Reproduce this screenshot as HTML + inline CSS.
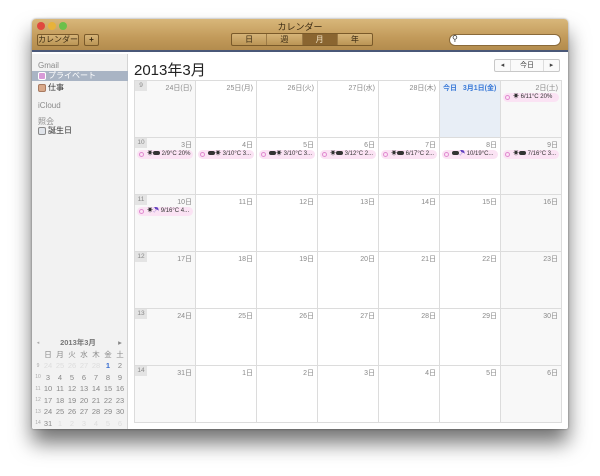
<!DOCTYPE html>
<html><head><meta charset="utf-8"><style>
*{margin:0;padding:0;box-sizing:border-box}
body{width:600px;height:476px;background:#fff;position:relative;overflow:hidden;font-family:"Liberation Sans","Noto Sans CJK JP",sans-serif}
.win{position:absolute;left:32px;top:19px;width:536px;height:410px;background:#fff;border-radius:4px 4px 2px 2px;box-shadow:0 14px 20px rgba(0,0,0,.55),0 0 2px rgba(0,0,0,.4);overflow:hidden}
.tb{position:absolute;left:0;top:0;width:536px;height:33px;background:linear-gradient(#d8b77a,#c29a5a 60%,#b38c4e);border-bottom:2px solid #4a5878}
.dot{position:absolute;top:3px;width:8px;height:8px;border-radius:50%}
.title{position:absolute;top:1px;left:0;width:536px;text-align:center;font-size:9px;color:#3a2a12}
.btn{position:absolute;top:15px;height:12px;border:1px solid #7a5a2a;border-radius:2px;background:linear-gradient(#d6b478,#bb9555);font-size:8px;color:#3a2a12;text-align:center;line-height:10px}
.seg{position:absolute;left:199px;top:14px;width:142px;height:13px;border:1px solid #7a5a2a;border-radius:2px;display:flex;background:linear-gradient(#d6b478,#bb9555)}
.seg div{flex:1;font-size:8px;text-align:center;line-height:11px;color:#3a2a12;border-right:1px solid #9c7a45}
.seg div:last-child{border:none}
.seg .on{background:#8a6530;color:#f0e0c0}
.search{position:absolute;left:417px;top:15px;width:112px;height:12px;background:#fff;border-radius:6px;border:1px solid #8a6a3a}
.side{position:absolute;left:0;top:35px;width:96px;height:375px;background:#f2f2f2;border-right:1px solid #d4d4d4}
.sl{position:absolute;font-size:8px;color:#8a8a8a}
.it{position:absolute;left:0;width:96px;height:10px;font-size:8px;color:#333;padding-left:16px;line-height:10px}
.sq{position:absolute;left:6px;top:1px;width:8px;height:8px;border-radius:2px}
.mini{position:absolute;left:2px;top:283px;width:92px;font-size:7.5px;color:#888}
.mini table{border-collapse:collapse;width:92px}
.mini td{text-align:center;height:11.5px;padding:0}
.mini td.w{font-size:5px;color:#aaa;width:8px}
.mini .g{color:#ddd}
h1{position:absolute;left:102px;top:40px;font-size:15px;font-weight:normal;color:#222}
.nav{position:absolute;left:462px;top:40px;width:66px;height:13px;border:1px solid #c8c8c8;border-radius:2px;display:flex;font-size:7px;color:#444;background:#fafafa}
.nav div{text-align:center;line-height:11px}
.grid{position:absolute;left:102px;top:61px;display:grid;grid-template-columns:repeat(7,60px);grid-template-rows:repeat(6,56px);gap:1px;background:#dcdcdc;border:1px solid #dcdcdc}
.c{background:#fff;position:relative;font-size:7px;color:#888}
.c.we{background:#f8f8f8}
.c.td{background:#e8eef6}
.d{position:absolute;right:3px;top:2px}
.wk{position:absolute;left:0;top:0;background:#e4e4e4;width:12px;height:10px;font-size:6.5px;color:#888;text-align:center;line-height:10px}
.ev{position:absolute;left:2px;right:2px;top:12px;height:9px;background:#fbe3f4;border-radius:5px;font-size:6px;color:#333;line-height:9px;padding-left:10px;white-space:nowrap;overflow:hidden}
.ev:before{content:"";position:absolute;left:2px;top:2px;width:5px;height:5px;border:1px solid #e08ad0;border-radius:50%;box-sizing:border-box}
.cl{display:inline-block;width:7px;height:4px;background:#333;border-radius:2px;vertical-align:0}
</style></head><body>
<div class="win">
<div class="tb">
<div class="dot" style="left:5px;background:#e0473e"></div>
<div class="dot" style="left:16px;background:#e8b23a"></div>
<div class="dot" style="left:27px;background:#6cc04a"></div>
<div class="title">カレンダー</div>
<div class="btn" style="left:5px;width:42px">カレンダー</div>
<div class="btn" style="left:52px;width:15px;font-weight:bold">+</div>
<div class="seg"><div>日</div><div>週</div><div class="on">月</div><div>年</div></div>
<div class="search"><span style="position:absolute;left:2px;top:-1px;font-size:8px;color:#333">⚲</span></div>
</div>
<div class="side">
<div class="sl" style="left:6px;top:7px">Gmail</div>
<div class="it" style="top:17px;background:#a9b4c4;color:#fff"><span class="sq" style="background:#d89ad8;border:1px solid #fff"></span>プライベート</div>
<div class="it" style="top:29px"><span class="sq" style="background:#d9a98a;border:1px solid #a87a60"></span>仕事</div>
<div class="sl" style="left:6px;top:47px">iCloud</div>
<div class="sl" style="left:6px;top:62px">照会</div>
<div class="it" style="top:72px"><span class="sq" style="background:#e0e4ea;border:1px solid #888"></span>誕生日</div>
<div class="mini">
<table>
<tr><td class="w">◂</td><td colspan="6" style="color:#777;font-weight:bold">2013年3月</td><td>▸</td></tr>
<tr><td class="w"></td><td>日</td><td>月</td><td>火</td><td>水</td><td>木</td><td>金</td><td>土</td></tr>
<tr><td class="w">9</td><td class="g">24</td><td class="g">25</td><td class="g">26</td><td class="g">27</td><td class="g">28</td><td style="color:#3a6fd0;font-weight:bold">1</td><td>2</td></tr>
<tr><td class="w">10</td><td>3</td><td>4</td><td>5</td><td>6</td><td>7</td><td>8</td><td>9</td></tr>
<tr><td class="w">11</td><td>10</td><td>11</td><td>12</td><td>13</td><td>14</td><td>15</td><td>16</td></tr>
<tr><td class="w">12</td><td>17</td><td>18</td><td>19</td><td>20</td><td>21</td><td>22</td><td>23</td></tr>
<tr><td class="w">13</td><td>24</td><td>25</td><td>26</td><td>27</td><td>28</td><td>29</td><td>30</td></tr>
<tr><td class="w">14</td><td>31</td><td class="g">1</td><td class="g">2</td><td class="g">3</td><td class="g">4</td><td class="g">5</td><td class="g">6</td></tr>
</table></div>
</div>
<h1>2013年3月</h1>
<div class="nav"><div style="width:16px;border-right:1px solid #ddd">◂</div><div style="flex:1">今日</div><div style="width:16px;border-left:1px solid #ddd">▸</div></div>
<div class="grid">
<div class="c we"><div class="wk">9</div><div class="d">24日(日)</div></div>
<div class="c"><div class="d">25日(月)</div></div>
<div class="c"><div class="d">26日(火)</div></div>
<div class="c"><div class="d">27日(水)</div></div>
<div class="c"><div class="d">28日(木)</div></div>
<div class="c td"><div class="d" style="left:3px;color:#3a7ad8;font-weight:bold">今日 &nbsp;&nbsp;3月1日(金)</div></div>
<div class="c we"><div class="d">2日(土)</div><div class="ev">☀ 6/11°C 20%</div></div>

<div class="c we"><div class="wk">10</div><div class="d">3日</div><div class="ev">☀<span class="cl"></span> 2/9°C 20%</div></div>
<div class="c"><div class="d">4日</div><div class="ev"><span class="cl"></span>☀ 3/10°C 3...</div></div>
<div class="c"><div class="d">5日</div><div class="ev"><span class="cl"></span>☀ 3/10°C 3...</div></div>
<div class="c"><div class="d">6日</div><div class="ev">☀<span class="cl"></span> 3/12°C 2...</div></div>
<div class="c"><div class="d">7日</div><div class="ev">☀<span class="cl"></span> 6/17°C 2...</div></div>
<div class="c"><div class="d">8日</div><div class="ev"><span class="cl"></span><span style="color:#6040c0">☂</span> 10/19°C...</div></div>
<div class="c we"><div class="d">9日</div><div class="ev">☀<span class="cl"></span> 7/16°C 3...</div></div>

<div class="c we"><div class="wk">11</div><div class="d">10日</div><div class="ev">☀<span style="color:#6040c0">☂</span> 9/16°C 4...</div></div>
<div class="c"><div class="d">11日</div></div>
<div class="c"><div class="d">12日</div></div>
<div class="c"><div class="d">13日</div></div>
<div class="c"><div class="d">14日</div></div>
<div class="c"><div class="d">15日</div></div>
<div class="c we"><div class="d">16日</div></div>

<div class="c we"><div class="wk">12</div><div class="d">17日</div></div>
<div class="c"><div class="d">18日</div></div>
<div class="c"><div class="d">19日</div></div>
<div class="c"><div class="d">20日</div></div>
<div class="c"><div class="d">21日</div></div>
<div class="c"><div class="d">22日</div></div>
<div class="c we"><div class="d">23日</div></div>

<div class="c we"><div class="wk">13</div><div class="d">24日</div></div>
<div class="c"><div class="d">25日</div></div>
<div class="c"><div class="d">26日</div></div>
<div class="c"><div class="d">27日</div></div>
<div class="c"><div class="d">28日</div></div>
<div class="c"><div class="d">29日</div></div>
<div class="c we"><div class="d">30日</div></div>

<div class="c we"><div class="wk">14</div><div class="d">31日</div></div>
<div class="c"><div class="d">1日</div></div>
<div class="c"><div class="d">2日</div></div>
<div class="c"><div class="d">3日</div></div>
<div class="c"><div class="d">4日</div></div>
<div class="c"><div class="d">5日</div></div>
<div class="c we"><div class="d">6日</div></div>
</div>
</div>
</body></html>
